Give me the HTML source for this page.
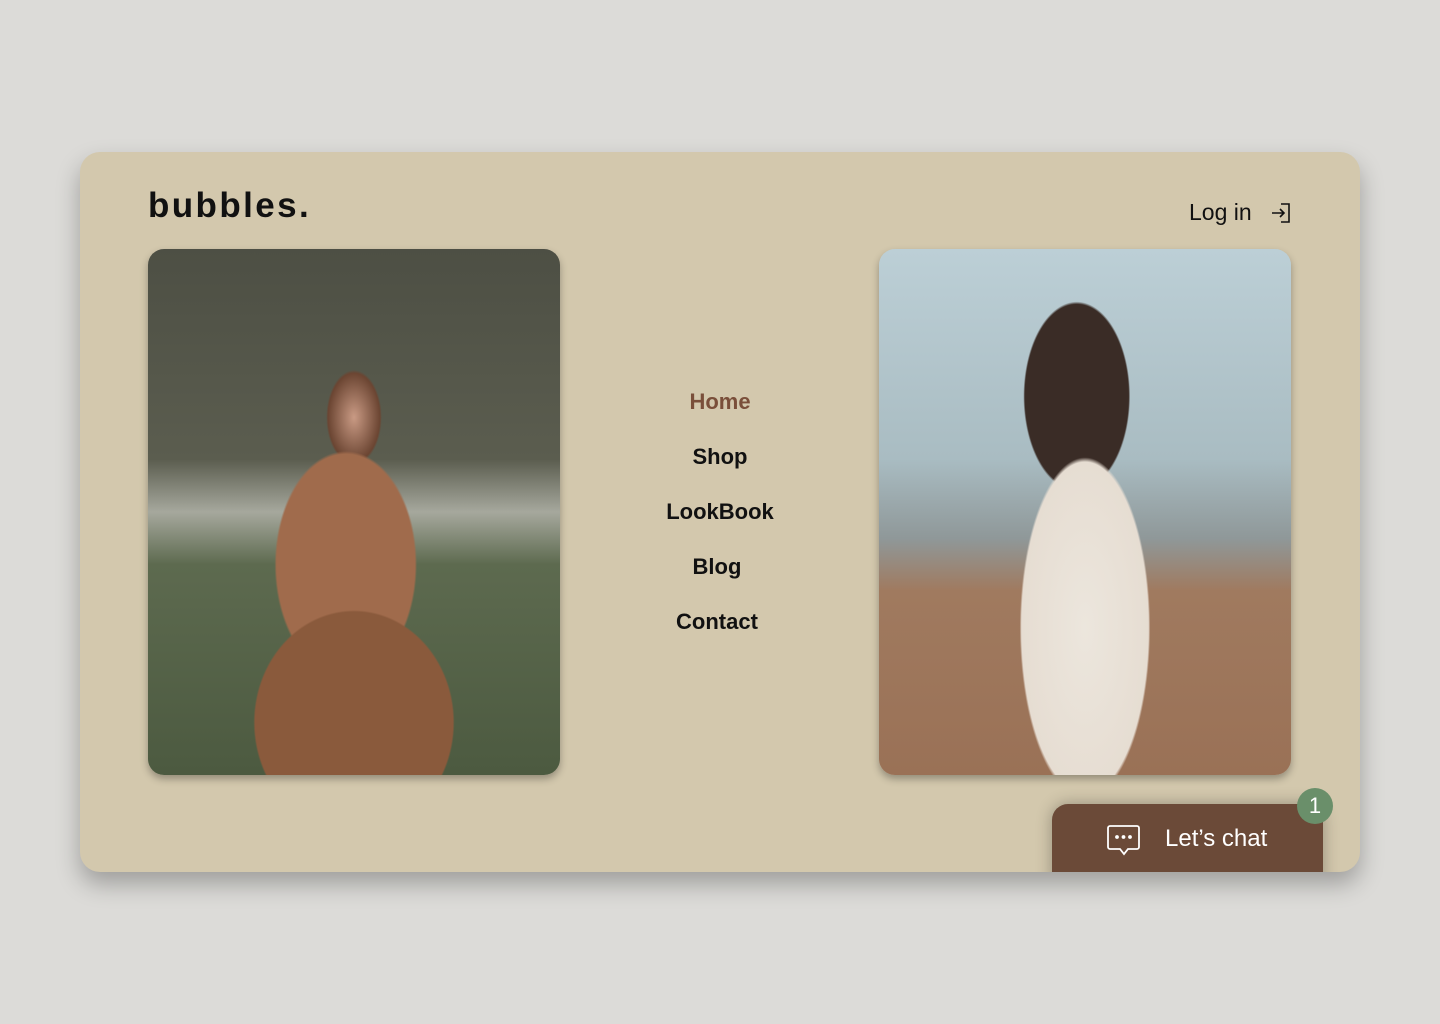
<!DOCTYPE html>
<html><head><style>
body{margin:0;width:1440px;height:1024px;background:#dcdbd8;font-family:"Liberation Sans",sans-serif;position:relative;overflow:hidden}
.card{position:absolute;left:80px;top:152px;width:1280px;height:720px;background:#d3c8ad;border-radius:20px;box-shadow:0 12px 24px rgba(0,0,0,.28);overflow:hidden}
.logo{position:absolute;left:68px;top:34px;font-size:35px;font-weight:bold;letter-spacing:2.4px;color:#111}
.login{position:absolute;left:1109px;top:47px;font-size:23px;color:#111}
.photo{position:absolute;top:97px;width:412px;height:526px;border-radius:16px;box-shadow:0 4px 8px rgba(0,0,0,.3);overflow:hidden}
.p1{left:68px;background:radial-gradient(ellipse 40% 35% at 50% 90%,#8a5a3c 0,#8a5a3c 60%,transparent 61%),radial-gradient(ellipse 24% 30% at 48% 60%,#a06b4c 0,#a06b4c 70%,transparent 72%),radial-gradient(ellipse 9% 12% at 50% 32%,#c99a84 0,#6b4532 70%,transparent 75%),linear-gradient(180deg,#4d4f44 0%,#5b5d4f 40%,#a6a89d 50%,#5d6a4f 60%,#4c5a40 100%)}
.p2{left:799px;background:radial-gradient(ellipse 22% 45% at 50% 72%,#ece6dd 0,#e6ddd2 70%,transparent 72%),radial-gradient(ellipse 18% 25% at 48% 28%,#3a2c26 0,#3a2c26 70%,transparent 72%),linear-gradient(180deg,#bccfd6 0%,#a9bcc2 40%,#8f9899 55%,#a07a5f 65%,#9a7156 100%)}
.nav{position:absolute;left:540px;width:200px;text-align:center;font-size:22px;font-weight:bold;color:#111}
.chat{position:absolute;left:972px;top:652px;width:271px;height:80px;background:#6b4a38;border-radius:16px 16px 0 0;box-shadow:0 0 16px rgba(0,0,0,.3)}
.chat span{position:absolute;left:113px;top:21px;color:#fff;font-size:24px}
.badge{position:absolute;left:1297px;top:788px;width:36px;height:36px;border-radius:50%;background:#6a8f6a;color:#fff;font-size:22px;text-align:center;line-height:36px}
</style></head><body>
<div class="card">
<div class="logo">bubbles.</div>
<div class="login">Log in
<svg style="position:absolute;left:82px;top:3px" width="20" height="22" viewBox="0 0 20 22" fill="none" stroke="#111" stroke-width="1.6"><path d="M10 2h8v18h-8"/><path d="M1 11h12M9 7l4 4-4 4"/></svg></div>
<div class="photo p1"></div>
<div class="photo p2"></div>
<div class="nav" style="top:237px;color:#7a4f3a">Home</div>
<div class="nav" style="top:292px">Shop</div>
<div class="nav" style="top:347px">LookBook</div>
<div class="nav" style="top:402px;left:537px">Blog</div>
<div class="nav" style="top:457px;left:537px">Contact</div>
<div class="chat">
<svg style="position:absolute;left:54px;top:20px" width="35" height="34" viewBox="0 0 35 34" fill="none" stroke="#fff" stroke-width="1.8"><path d="M4 2h27a2 2 0 0 1 2 2v19a2 2 0 0 1-2 2h-9l-4 5-4-5H4a2 2 0 0 1-2-2V4a2 2 0 0 1 2-2z"/><circle cx="11" cy="13" r="1" fill="#fff"/><circle cx="17.5" cy="13" r="1" fill="#fff"/><circle cx="24" cy="13" r="1" fill="#fff"/></svg>
<span>Let’s chat</span></div>
</div>
<div class="badge">1</div>
</body></html>
